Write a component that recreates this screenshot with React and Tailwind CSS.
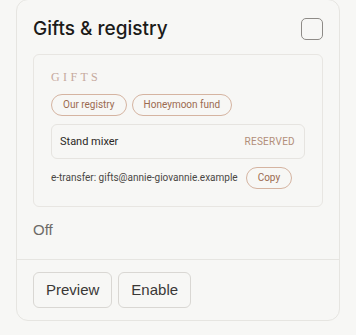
export default function App() {
  return (
    <div className="min-h-[335px] w-[356px] bg-[#f7f7f5] px-4 pb-4" style={{ fontFamily: '"Liberation Sans", Arial, sans-serif' }}>
      <div className="-mt-px rounded-xl border border-[#e6e5e1] bg-[#f7f7f5]">
        <div className="px-4 pt-[17px] pb-[20px]">
          <div className="flex items-center justify-between">
            <h2 className="font-['Inter'] text-[19px] font-medium leading-[24px] text-[#1c1b19]">Gifts &amp; registry</h2>
            <div className="h-[22px] w-[22px] rounded-[5px] border-[1.5px] border-[#8e8b87]" />
          </div>
          <div className="mt-[13px] rounded-md border border-[#e8e6e2] px-[17px] pt-[16px] pb-[17px] font-['Roboto']">
            <div className="font-['Liberation_Serif'] text-[12px] leading-none tracking-[0.28em] text-[#c6a99d]">GIFTS</div>
            <div className="mt-[11px] flex gap-[5px]">
              <span className="rounded-full border border-[#d5b4a1] px-[11px] py-[4px] text-[10px] leading-[12px] text-[#9c6a4f]">Our registry</span>
              <span className="rounded-full border border-[#d5b4a1] px-[11px] py-[4px] text-[10px] leading-[12px] text-[#9c6a4f]">Honeymoon fund</span>
            </div>
            <div className="mt-2 flex items-center justify-between rounded-md border border-[#e6e4e0] pl-[8px] pr-[9px] py-[10px]">
              <span className="text-[11px] leading-[13px] text-[#2a2826]">Stand mixer</span>
              <span className="text-[10px] leading-[13px] tracking-[0.03em] text-[#b28e79]">RESERVED</span>
            </div>
            <div className="mt-2 flex items-center gap-2">
              <span className="text-[10px] leading-[12px] text-[#4a4744]">e-transfer: gifts@annie-giovannie.example</span>
              <span className="rounded-full border border-[#d5b4a1] px-[11px] py-[4px] text-[10px] leading-[12px] text-[#9c6a4f]">Copy</span>
            </div>
          </div>
          <div className="mt-[14px] text-[15px] leading-[18px] text-[#6d6a66]">Off</div>
        </div>
        <div className="flex gap-[6px] border-t border-[#e6e5e1] px-4 pt-3 pb-3">
          <button className="rounded-md border border-[#d9d7d3] px-3 py-2 text-[15px] leading-[18px] text-[#3a3836]">Preview</button>
          <button className="rounded-md border border-[#d9d7d3] px-3 py-2 text-[15px] leading-[18px] text-[#3a3836]">Enable</button>
        </div>
      </div>
    </div>
  );
}
